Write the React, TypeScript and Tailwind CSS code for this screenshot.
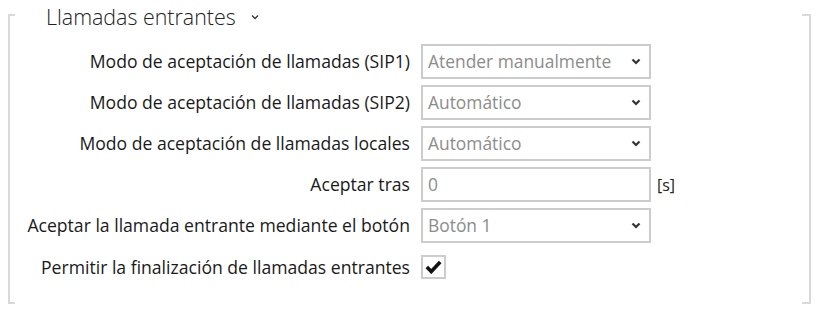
import React from "react";

const Chevron = () => (
  <svg width="10" height="7" viewBox="0 0 10 7" className="shrink-0">
    <path d="M1.5 1.5 L5 5 L8.5 1.5" fill="none" stroke="#333" strokeWidth="2.2" />
  </svg>
);

const Select = ({ value }: { value: string }) => (
  <div className="w-[230px] h-[35px] border-2 border-[#cccccc] flex items-center justify-between pl-[5px] pr-[8px] bg-white">
    <span className="text-[17.4px] text-[#8c8c8c] font-['Open_Sans',sans-serif] leading-none">{value}</span>
    <Chevron />
  </div>
);

const Row = ({ label, children, h = "h-[35px]" }: { label: string; children: React.ReactNode; h?: string }) => (
  <div className={`flex items-center gap-[11px] ${h}`}>
    <div className="w-[395px] text-right text-[17.6px] text-[#1a1a1a] font-['Open_Sans',sans-serif] whitespace-nowrap">{label}</div>
    {children}
  </div>
);

export default function App() {
  return (
    <div className="w-[820px] h-[319px] bg-white flex pl-[8px] pr-[9px]">
      <div className="w-[7px] mt-[14px] h-[290px] border-l-2 border-t-2 border-b-2 border-[#d9d9d9] shrink-0" />
      <div className="flex-1 flex flex-col">
        <div className="pl-[31px] h-[33px] flex items-center gap-[15px]">
          <span className="text-[21.4px] font-light text-[#222] font-['Open_Sans',sans-serif] leading-none">Llamadas entrantes</span>
          <svg width="8" height="6" viewBox="0 0 8 6"><path d="M1 1.5 L4 4.5 L7 1.5" fill="none" stroke="#333" strokeWidth="1.3" /></svg>
        </div>
        <div className="mt-[11px] flex flex-col gap-[6px]">
          <Row label="Modo de aceptación de llamadas (SIP1)"><Select value="Atender manualmente" /></Row>
          <Row label="Modo de aceptación de llamadas (SIP2)"><Select value="Automático" /></Row>
          <Row label="Modo de aceptación de llamadas locales"><Select value="Automático" /></Row>
          <Row label="Aceptar tras">
            <div className="w-[230px] h-[35px] border-2 border-[#cccccc] flex items-center pl-[5px]">
              <span className="text-[17.4px] text-[#8c8c8c] font-['Open_Sans',sans-serif] leading-none">0</span>
            </div>
            <span className="text-[16px] text-[#222] font-['Open_Sans',sans-serif] -ml-[5px]">[s]</span>
          </Row>
          <Row label="Aceptar la llamada entrante mediante el botón"><Select value="Botón 1" /></Row>
          <div className="mt-[6px]">
            <Row label="Permitir la finalización de llamadas entrantes" h="h-[24px]">
              <div className="w-[25px] h-[24px] border-2 border-[#cccccc] flex items-center justify-center">
                <svg width="17" height="14" viewBox="0 0 17 14"><path d="M1.8 7 L6.3 11.5 L15.2 2" fill="none" stroke="#111" strokeWidth="3.6" /></svg>
              </div>
            </Row>
          </div>
        </div>
      </div>
      <div className="w-[9px] mt-[14px] h-[290px] border-r-2 border-t-2 border-b-2 border-[#d9d9d9] shrink-0" />
    </div>
  );
}
